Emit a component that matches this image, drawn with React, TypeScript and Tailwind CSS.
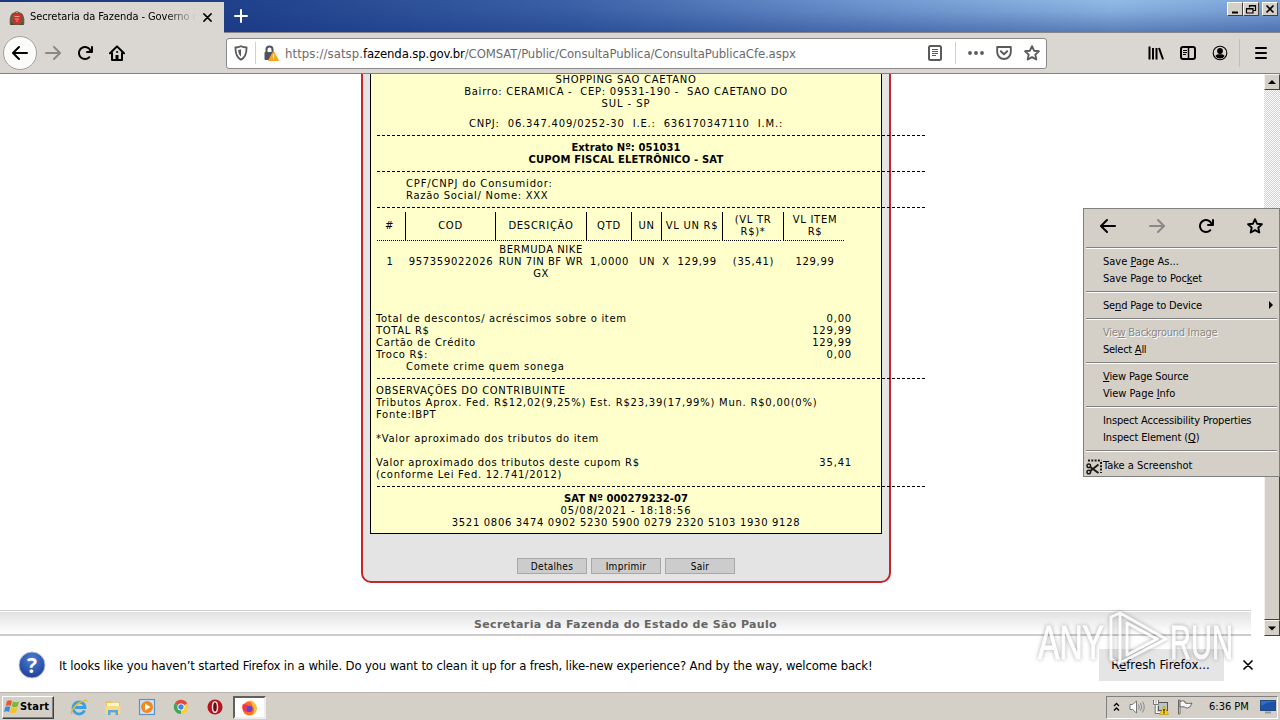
import React from "react";

interface IconProps {
  className?: string;
}

const BackIcon: React.FC<IconProps> = ({ className = "" }) => (
  <svg viewBox="0 0 16 16" fill="currentColor" className={`h-4 w-4 ${className}`}>
    <path d="M15 7H3.414l4.293-4.293a1 1 0 0 0-1.414-1.414l-6 6a1 1 0 0 0 0 1.414l6 6a1 1 0 0 0 1.414-1.414L3.414 9H15a1 1 0 0 0 0-2z" />
  </svg>
);

const ReloadIcon = () => (
  <svg viewBox="0 0 16 16" fill="currentColor" className="h-4 w-4">
    <path d="M15 1a1 1 0 0 0-1 1v2.418A6.995 6.995 0 1 0 8 15a6.954 6.954 0 0 0 4.95-2.05 1 1 0 0 0-1.414-1.414A5.019 5.019 0 1 1 12.549 6H10a1 1 0 0 0 0 2h5a1 1 0 0 0 1-1V2a1 1 0 0 0-1-1z" />
  </svg>
);

const HomeIcon = () => (
  <svg viewBox="0 0 16 16" fill="none" stroke="currentColor" strokeWidth="2" strokeLinecap="round" strokeLinejoin="round" className="h-4 w-4">
    <path d="M1 8.2 8 1.4l7 6.8M3 8v7h10V8" />
    <path d="M8 14v-4" strokeWidth="3" strokeLinecap="butt" />
    <circle cx="8" cy="7" r=".6" strokeWidth="1" />
  </svg>
);

const StarIcon = () => (
  <svg viewBox="0 0 16 16" fill="none" stroke="currentColor" strokeWidth="1.9" strokeLinejoin="round" className="h-4 w-4">
    <path d="M8 1.2l2.05 4.5 4.85.55-3.6 3.35 1 4.9L8 12.05 3.7 14.5l1-4.9L1.1 6.25l4.85-.55z" />
  </svg>
);

const ShieldIcon = () => (
  <svg viewBox="0 0 16 16" className="h-4 w-4">
    <path d="M8 1.2c1.8.8 3.7 1.2 5.6 1.3 0 5.5-.9 9.8-5.6 12.2C3.3 12.3 2.4 8 2.4 2.5 4.3 2.4 6.2 2 8 1.2z" fill="none" stroke="#5a5a5a" strokeWidth="1.8" strokeLinejoin="round" />
    <path d="M8 4.2v7.3C6 10 5.3 7.8 5.2 4.9 6.2 4.8 7.1 4.6 8 4.2z" fill="#5a5a5a" />
  </svg>
);

const LockWarnIcon = () => (
  <svg viewBox="0 0 16 16" className="h-4 w-4">
    <path d="M3.500 8V4.500a3 3 0 0 1 6 0V8" fill="none" stroke="#4d5360" strokeWidth="2" />
    <rect x="1.500" y="7" width="10" height="8" rx="1" fill="#4d5360" />
    <path d="M10.500 6.500l5 9h-10z" fill="#f8a61c" stroke="#f8a61c" strokeWidth="1" strokeLinejoin="round" />
    <path d="M10.500 9v3.500M10.500 13.500v1.200" stroke="#fff" strokeWidth="1.2" />
  </svg>
);

const ReaderIcon = () => (
  <svg viewBox="0 0 16 16" fill="none" stroke="#5a5a5a" className="h-4 w-4">
    <rect x="2" y="1" width="12" height="14" rx="1.5" strokeWidth="2" />
    <path d="M5 4.500h6M5 6.500h6M5 8.500h6M5 10.500h4" strokeWidth="1" />
  </svg>
);

const PocketIcon = () => (
  <svg viewBox="0 0 16 16" fill="none" stroke="currentColor" strokeWidth="1.9" strokeLinecap="round" strokeLinejoin="round" className="h-4 w-4">
    <path d="M1.2 2h13.600v5.200a6.800 6.800 0 0 1-13.600 0z" />
    <path d="M4.800 6.200 8 9.200l3.200-3" />
  </svg>
);

const LibraryIcon = () => (
  <svg viewBox="0 0 16 16" stroke="currentColor" strokeWidth="2" className="h-4 w-4">
    <path d="M1.500 1.500v13M5 3v11.500M8.500 3v11.500M11 3l4 11.300" fill="none" />
  </svg>
);

const SidebarIcon = () => (
  <svg viewBox="0 0 16 16" fill="none" stroke="currentColor" className="h-4 w-4">
    <rect x="1" y="2" width="14" height="12" rx="2" strokeWidth="2" />
    <path d="M8.500 2v12" strokeWidth="1.5" />
    <path d="M3 5.500h4M3 7.500h4M3 9.500h3" strokeWidth="1" />
  </svg>
);

const AccountIcon = () => (
  <svg viewBox="0 0 16 16" className="h-4 w-4">
    <circle cx="8" cy="8" r="6.800" fill="none" stroke="currentColor" strokeWidth="1.1" />
    <circle cx="8" cy="6" r="2.900" fill="currentColor" />
    <path d="M3.300 11c1.300-1.600 2.600-1.800 4.700-1.800s3.400.2 4.700 1.800A5.600 5.600 0 0 1 8 13.600 5.600 5.600 0 0 1 3.300 11z" fill="currentColor" />
  </svg>
);

const CrossIcon: React.FC<IconProps> = ({ className = "" }) => (
  <svg viewBox="0 0 10 10" stroke="currentColor" strokeWidth="1.7" strokeLinecap="round" className={className}>
    <path d="M1 1l8 8M9 1L1 9" />
  </svg>
);

const CrestIcon = () => (
  <svg viewBox="0 0 16 16" className="h-4 w-4">
    <path d="M1 15C0 10 1 4 4 3l4-2 4 2c3 1 4 7 3 12z" fill="#6d5a3e" />
    <path d="M2 12c1 2 3 3 6 3s5-1 6-3v3H2z" fill="#4c4438" />
    <path d="M4 4h8v5c0 3-2 4.500-4 5-2-.5-4-2-4-5z" fill="#d22f2a" />
    <path d="M5.500 6.500h5M6 9h4M7 11h2" stroke="#f3b1a0" strokeWidth=".8" />
    <path d="M8 1l1 2H7z" fill="#b9b4a5" />
  </svg>
);

const WindowButton: React.FC<{ children: React.ReactNode }> = ({ children }) => (
  <div className="h-[14px] w-4 border border-t-white border-l-white border-r-[#404040] border-b-[#404040] bg-[#d4d0c8]">
    <svg viewBox="0 0 14 12" className="h-3 w-[14px]" fill="none" stroke="currentColor">
      {children}
    </svg>
  </div>
);

const TabStrip = () => (
  <div className="h-[33px] shrink-0 border-b border-[#85858a] bg-[linear-gradient(180deg,rgba(24,52,130,0)_0%,rgba(24,52,130,0.1)_35%,rgba(24,52,130,0.45)_100%),linear-gradient(90deg,#1c3a7e_0%,#21428c_20%,#3c62a8_45%,#7097d0_68%,#92bbe6_87%,#7da4d8_100%)] flex">
    <div className="mt-[2px] h-[31px] w-[224px] bg-[#dad6d1] flex items-center pl-[9px] -mb-px">
      <CrestIcon />
      <span className="ml-[5px] w-[166px] overflow-hidden whitespace-nowrap text-[11px] tracking-[-0.07px] text-black [mask-image:linear-gradient(90deg,#000_82%,transparent_100%)]">
        Secretaria da Fazenda - Governo d
      </span>
      <CrossIcon className="ml-[7px] h-[9px] w-[9px]" />
    </div>
    <svg viewBox="0 0 14 14" className="ml-[10px] mt-[9px] h-[14px] w-[14px]" stroke="#fff" strokeWidth="2" strokeLinecap="round">
      <path d="M7 1v12M1 7h12" />
    </svg>
    <div className="ml-auto mr-[2px] mt-[2px] flex text-black">
      <WindowButton>
        <path d="M4 9.500h6" strokeWidth="2" />
      </WindowButton>
      <WindowButton>
        <path d="M5.500 4.500v-2h6v5h-2M5.500 3h6M2.500 5.500h6.500v4.500H2.500zM2.500 6h6.500" strokeWidth="1.2" />
      </WindowButton>
      <div className="w-[3px]" />
      <WindowButton>
        <path d="M3.500 2.500l7 7M10.500 2.500l-7 7" strokeWidth="1.7" />
      </WindowButton>
    </div>
  </div>
);

const NavBar = () => (
  <div className="h-[41px] shrink-0 border-b border-[#808080] bg-[#dad6d1] flex items-center pl-[3px] text-black">
    <div className="h-[34px] w-[34px] rounded-full border border-[#a3a19d] bg-[#fbfbfa] flex items-center justify-center">
      <BackIcon />
    </div>
    <BackIcon className="ml-2 rotate-180 text-[#8b8985]" />
    <div className="ml-4 flex gap-4">
      <ReloadIcon />
      <HomeIcon />
    </div>

    {/* Address bar */}
    <div className="ml-[101px] h-[31px] w-[821px] rounded-[3px] border border-[#8a8a8a] bg-white flex items-center">
      <div className="ml-[6px]">
        <ShieldIcon />
      </div>
      <div className="ml-[6px] h-[22px] w-px bg-[#d0d0d0]" />
      <div className="ml-[7px]">
        <LockWarnIcon />
      </div>
      <div className="ml-[6px] mt-px flex whitespace-nowrap text-[13px] leading-4 text-[#6b6b6b]">
        <span className="tracking-[0.07px]">https://satsp.</span>
        <span className="tracking-[-0.13px] text-black">fazenda.sp.gov.br</span>
        <span className="tracking-[-0.1px]">/COMSAT/Public/ConsultaPublica/ConsultaPublicaCfe.aspx</span>
      </div>
      <div className="ml-auto mr-[6px] flex items-center text-[#5a5a5a]">
        <ReaderIcon />
        <div className="ml-3 h-[22px] w-px bg-[#d0d0d0]" />
        <svg viewBox="0 0 16 16" fill="currentColor" className="ml-3 h-4 w-4">
          <circle cx="2" cy="8" r="1.9" />
          <circle cx="8" cy="8" r="1.9" />
          <circle cx="14" cy="8" r="1.9" />
        </svg>
        <div className="ml-3 flex gap-3">
          <PocketIcon />
          <StarIcon />
        </div>
      </div>
    </div>

    <div className="ml-auto flex items-center pr-[11px]">
      <div className="flex gap-4">
        <LibraryIcon />
        <SidebarIcon />
        <AccountIcon />
      </div>
      <div className="ml-[11px] h-7 w-px bg-[#c3bfba]" />
      <svg viewBox="0 0 16 16" className="ml-[13px] h-4 w-4" stroke="currentColor" strokeWidth="2" strokeLinecap="round">
        <path d="M3 3h10M3 8h10M3 13h10" />
      </svg>
    </div>
  </div>
);

/* Dashed separator, runs past the right edge of the receipt */
const Dashes: React.FC<IconProps> = ({ className = "h-3" }) => (
  <div className={`pl-px pt-[5px] ${className}`}>
    <div className="h-px w-[549px] bg-[repeating-linear-gradient(90deg,#000_0_3px,transparent_3px_5px)]" />
  </div>
);

const columns = [
  { label: "#", width: "w-[30px]", pad: "pr-[2px]" },
  { label: "COD", width: "w-[90px]", pad: "" },
  { label: "DESCRIÇÃO", width: "w-[91px]", pad: "" },
  { label: "QTD", width: "w-[45px]", pad: "" },
  { label: "UN", width: "w-[30px]", pad: "" },
  { label: "VL UN R$", width: "w-[61px]", pad: "" },
  { label: "(VL TR R$)*", width: "w-[61px]", pad: "px-2" },
  { label: "VL ITEM R$", width: "w-[62px]", pad: "px-1" },
];

const totals = [
  ["Total de descontos/ acréscimos sobre o item", "0,00"],
  ["TOTAL R$", "129,99"],
  ["Cartão de Crédito", "129,99"],
  ["Troco R$:", "0,00"],
];

const Receipt = () => (
  <div className="h-[460px] border border-t-0 border-black bg-[#ffffcc] px-[5px] font-['DejaVu_Sans',Verdana,sans-serif] text-[10px] leading-3 tracking-[0.7px] text-black whitespace-pre">
    <div className="text-center">
      <p>SHOPPING SAO CAETANO</p>
      <p className="tracking-[0.73px]">Bairro: CERAMICA -  CEP: 09531-190 -  SAO CAETANO DO</p>
      <p className="tracking-[0.9px]">SUL - SP</p>
      <p className="mt-2 tracking-[0.81px]">CNPJ:  06.347.409/0252-30  I.E.:  636170347110  I.M.:</p>
    </div>
    <Dashes />
    <div className="text-center font-bold">
      <p className="tracking-[0.05px]">Extrato Nº: 051031</p>
      <p className="tracking-[0.15px]">CUPOM FISCAL ELETRÔNICO - SAT</p>
    </div>
    <Dashes />
    <div className="pl-[30px]">
      <p className="tracking-[0.83px]">CPF/CNPJ do Consumidor:</p>
      <p>Razão Social/ Nome: XXX</p>
    </div>
    <Dashes className="h-[10px]" />

    {/* Item table */}
    <div className="flex h-[29px] whitespace-normal">
      {columns.map((c, i) => (
        <div key={c.label} className={`${c.width} flex flex-col ${i < columns.length - 1 ? "border-r border-black" : ""}`}>
          <div className={`flex flex-1 items-center justify-center text-center ${c.pad}`}>{c.label}</div>
          <div className="mx-px h-px bg-[repeating-linear-gradient(90deg,#000_0_1px,transparent_1px_2px)]" />
        </div>
      ))}
    </div>
    <div className="mt-[3px] flex items-center text-center">
      <span className="w-[30px] pr-[2px]">1</span>
      <span className="w-[90px]">957359022026</span>
      <span className="w-[91px] pr-px tracking-[0.55px]">{"BERMUDA NIKE\nRUN 7IN BF WR\nGX"}</span>
      <span className="w-[45px]">1,0000</span>
      <span className="w-[30px]">UN</span>
      <span className="w-[61px] pr-[6px]">X  129,99</span>
      <span className="w-[61px]">(35,41)</span>
      <span className="w-[62px]">129,99</span>
    </div>

    <div className="mt-[33px] w-[476px]">
      {totals.map(([label, value]) => (
        <div key={label} className="flex justify-between">
          <span className="tracking-[0.67px]">{label}</span>
          <span className="tracking-[0.8px]">{value}</span>
        </div>
      ))}
      <p className="pl-[30px]">Comete crime quem sonega</p>
    </div>
    <Dashes />
    <div className="w-[476px]">
      <p className="tracking-[0.68px]">OBSERVAÇÕES DO CONTRIBUINTE</p>
      <p className="tracking-[0.765px]">Tributos Aprox. Fed. R$12,02(9,25%) Est. R$23,39(17,99%) Mun. R$0,00(0%)</p>
      <p>Fonte:IBPT</p>
      <p className="mt-3 tracking-[0.69px]">*Valor aproximado dos tributos do item</p>
      <div className="mt-3 flex justify-between">
        <span className="tracking-[0.65px]">Valor aproximado dos tributos deste cupom R$</span>
        <span className="tracking-[0.8px]">35,41</span>
      </div>
      <p className="tracking-[0.72px]">(conforme Lei Fed. 12.741/2012)</p>
    </div>
    <Dashes />
    <div className="text-center">
      <p className="font-bold tracking-[0.08px]">SAT Nº 000279232-07</p>
      <p className="tracking-[0.87px]">05/08/2021 - 18:18:56</p>
      <p className="tracking-[0.68px]">3521 0806 3474 0902 5230 5900 0279 2320 5103 1930 9128</p>
    </div>
  </div>
);

const ScrollButton: React.FC<{ path: string }> = ({ path }) => (
  <div className="h-4 w-4 shrink-0 border border-t-[#f4f2ee] border-l-[#f4f2ee] border-r-[#404040] border-b-[#404040] bg-[#d4d0c8]">
    <svg viewBox="0 0 14 14" className="h-[14px] w-[14px]">
      <path d={path} fill="#000" />
    </svg>
  </div>
);

const Page = () => (
  <div className="flex h-[562px] shrink-0 bg-white">
    <div className="w-[1252px] flex flex-col">
      <div className="mx-auto h-[509px] w-[530px] rounded-b-[10px] border-2 border-t-0 border-[#c1272d] bg-[#e4e4e4] px-[7px]">
        <Receipt />
        <div className="mt-6 flex justify-center gap-1 text-[10px] tracking-[0.3px]">
          {["Detalhes", "Imprimir", "Sair"].map((b) => (
            <button key={b} className="h-4 w-[70px] border border-[#a8a8a8] bg-[#cccccc] leading-4 text-black">
              {b}
            </button>
          ))}
        </div>
      </div>
      <div className="mr-px mt-auto h-[26px] border-t border-b-2 border-[#cccccc] pt-px">
        <div className="h-[22px] bg-[linear-gradient(180deg,#e2e2e2,#ffffff)] text-center font-['DejaVu_Sans',Verdana,sans-serif] text-[11px] font-bold leading-[26px] tracking-[0.35px] text-[#666666]">
          Secretaria da Fazenda do Estado de São Paulo
        </div>
      </div>
    </div>
    <div className="ml-auto flex w-4 flex-col bg-[repeating-conic-gradient(#d4d0c8_0_25%,#ffffff_0_50%)] bg-[length:2px_2px]">
      <ScrollButton path="M7 5l4 4H3z" />
      <div className="mt-auto h-[240px] border border-t-white border-l-[#f4f2ee] border-r-[#404040] border-b-[#404040] bg-[#d4d0c8]" />
      <ScrollButton path="M7 9.500l4-4H3z" />
    </div>
  </div>
);

const MenuSeparator = () => (
  <div className="h-[10px] px-px pt-1">
    <div className="h-[2px] border-t border-[#808080] bg-white" />
  </div>
);

const MenuItem: React.FC<{ children: React.ReactNode; className?: string }> = ({ children, className = "" }) => (
  <div className={`relative h-[17px] pl-[18px] leading-[17px] ${className}`}>{children}</div>
);

const ContextMenu = () => (
  <div className="absolute left-[1083px] top-[208px] h-[269px] w-[197px] border border-[#808080] bg-[#d4d0c8] p-px text-[11px] whitespace-nowrap text-black">
    <div className="flex h-[33px] items-center justify-between px-[15px] pb-px">
      <BackIcon />
      <BackIcon className="rotate-180 text-[#8b8985]" />
      <ReloadIcon />
      <StarIcon />
    </div>
    <MenuSeparator />
    <MenuItem>Save <u>P</u>age As...</MenuItem>
    <MenuItem className="tracking-[-0.05px]">Save Page to Poc<u>k</u>et</MenuItem>
    <MenuSeparator />
    <MenuItem className="tracking-[-0.17px]">
      Se<u>n</u>d Page to Device
      <svg viewBox="0 0 4 8" className="absolute right-[5px] top-[4px] h-2 w-1">
        <path d="M0 0l4 4-4 4z" />
      </svg>
    </MenuItem>
    <MenuSeparator />
    <MenuItem className="tracking-[-0.26px] text-[#8a8884] [text-shadow:1px_1px_0_#fff]">Vie<u>w</u> Background Image</MenuItem>
    <MenuItem className="tracking-[-0.26px]">Select <u>A</u>ll</MenuItem>
    <MenuSeparator />
    <MenuItem className="tracking-[-0.14px]"><u>V</u>iew Page Source</MenuItem>
    <MenuItem>View Page <u>I</u>nfo</MenuItem>
    <MenuSeparator />
    <MenuItem className="tracking-[-0.15px]">Inspect Accessibility Properties</MenuItem>
    <MenuItem className="tracking-[-0.13px]">Inspect Element (<u>Q</u>)</MenuItem>
    <MenuSeparator />
    <div className="flex h-5 items-center pl-px pt-px">
      <svg viewBox="0 0 16 16" className="h-4 w-4" fill="none" stroke="#1a1a1a">
        <path d="M2 1.500h13.500M15 3v11" strokeWidth="2" strokeDasharray="2 1.3" />
        <circle cx="2.800" cy="6.800" r="1.800" strokeWidth="1.5" />
        <circle cx="2.800" cy="13" r="1.800" strokeWidth="1.5" />
        <path d="M4.200 8l8.300 6M4.200 12l8.300-6.500" strokeWidth="2" />
      </svg>
      <span className="ml-px">Take a Screenshot</span>
    </div>
  </div>
);

const NotificationBar = () => (
  <div className="flex h-[56px] shrink-0 items-center bg-white text-[13px] whitespace-nowrap text-black">
    <svg viewBox="0 0 28 28" className="ml-[18px] mt-[2px] h-7 w-7">
      <defs>
        <radialGradient id="help" cx=".5" cy=".3" r=".75">
          <stop offset="0" stopColor="#4f7fd6" />
          <stop offset="1" stopColor="#173a92" />
        </radialGradient>
      </defs>
      <circle cx="14" cy="14" r="13" fill="url(#help)" stroke="#b4c0d8" strokeWidth="1" />
      <text x="14" y="21.5" textAnchor="middle" fill="#fff" fontSize="21" fontWeight="bold" fontFamily="Open Sans, sans-serif">?</text>
    </svg>
    <span className="ml-[13px] mt-[3px] tracking-[-0.14px]">
      It looks like you haven’t started Firefox in a while. Do you want to clean it up for a fresh, like-new experience? And by the way, welcome back!
    </span>
    <button className="ml-auto mt-[2px] h-8 w-[125px] bg-[#e5e5e5] pr-[2px] tracking-[0.05px]">
      R<u>e</u>fresh Firefox...
    </button>
    <CrossIcon className="ml-[19px] mr-[27px] mt-[2px] h-[10px] w-[10px]" />
  </div>
);

const Watermark = () => (
  <svg viewBox="0 0 200 60" className="pointer-events-none absolute left-[1036px] top-[608px] h-[60px] w-[200px] opacity-75 drop-shadow-[0_0_2px_rgba(0,0,0,0.45)]">
    <g fill="#ffffff" stroke="#ffffff" strokeWidth="1" fontFamily="Liberation Sans, sans-serif" fontSize="49">
      <text x="2" y="51" textLength="66" lengthAdjust="spacingAndGlyphs">ANY</text>
      <text x="134" y="51" textLength="63" lengthAdjust="spacingAndGlyphs">RUN</text>
    </g>
    <path d="M84 5l-9 4v42l9 5M84 5v50l46-24zM91 15l30 16-30 16z" fill="none" stroke="#fff" strokeWidth="3" strokeLinejoin="round" />
  </svg>
);

const WindowsFlag = () => (
  <svg viewBox="0 0 16 16" className="h-4 w-4">
    <path d="M3 2c2-1 3.500-1 5 0L6.700 7c-1.700-1-3-1-5 0z" fill="#e8582a" />
    <path d="M9 2.500c2 1 3.500 1 6 0L13.600 7.500c-2 1-4 1-6 0z" fill="#7ab93c" />
    <path d="M1.300 8c2-1 3.500-1 5 0L5 13c-1.700-1-3-1-5 0z" fill="#3f8ad8" />
    <path d="M7.300 8.500c2 1 3.500 1 6 0L12 13.500c-2 1-4 1-6 0z" fill="#f6c224" />
  </svg>
);

const IeIcon = () => (
  <svg viewBox="0 0 18 18" className="h-[18px] w-[18px]" fill="none">
    <path d="M14.500 12.500a6 6 0 1 1 .5-3H5" stroke="#3aa0e0" strokeWidth="2.8" />
    <path d="M2 16c-2-2 2-8 7-11s8-3.500 8-1.500" stroke="#e9b932" strokeWidth="1.5" />
  </svg>
);

const ExplorerIcon = () => (
  <svg viewBox="0 0 18 18" className="h-[18px] w-[18px]">
    <path d="M2 3h5l1 1.500h8V15H2z" fill="#e6c65c" />
    <path d="M3 5h12v5H3z" fill="#fbf3c4" />
    <path d="M1.500 8h15v8h-15z" fill="#f5dc84" />
    <path d="M4 17v-5h10v5h-2.500v-2.500h-5V17z" fill="#58a8dc" />
  </svg>
);

const MediaIcon = () => (
  <svg viewBox="0 0 18 18" className="h-[18px] w-[18px]">
    <rect x="1.5" y="1.5" width="15" height="15" fill="#cfe2f5" stroke="#5f93c8" strokeWidth="1.2" />
    <circle cx="9" cy="9" r="6" fill="#f08a1c" />
    <path d="M7 5.500l5.500 3.500L7 12.500z" fill="#fff" />
  </svg>
);

const ChromeIcon = () => (
  <svg viewBox="0 0 18 18" className="h-4 w-4">
    <path d="M9 9L2 5a8 8 0 0 1 14 0z" fill="#e04a3a" />
    <path d="M9 9l7-4a8 8 0 0 1-7 12z" fill="#f8cf3a" />
    <path d="M9 9v8A8 8 0 0 1 2 5z" fill="#3fa654" />
    <circle cx="9" cy="9" r="4" fill="#fff" />
    <circle cx="9" cy="9" r="3" fill="#4484ee" />
  </svg>
);

const OperaIcon = () => (
  <svg viewBox="0 0 18 18" className="h-4 w-4">
    <circle cx="9" cy="9" r="8.5" fill="#b81420" />
    <ellipse cx="9" cy="9" rx="2.8" ry="6" fill="#6d0710" stroke="#f2e2e2" strokeWidth="1.6" />
  </svg>
);

const FirefoxIcon = () => (
  <svg viewBox="0 0 18 18" className="h-[17px] w-[17px]">
    <circle cx="9" cy="10" r="7.5" fill="#ff6a2a" />
    <path d="M10 1c4 2 7 5 6.500 10-.3 3-3 6-7 6.500 4-2 5-5 4-8S9.500 4 10 1z" fill="#ffbd2e" />
    <path d="M2 5c1 1 2 1 3.500.8C7 5.500 8 7 7 8c-2 1-2 4 1 5.500-4 1-7-2-6.500-6z" fill="#f2324e" />
    <circle cx="9" cy="10.5" r="3.3" fill="#6a42c8" />
  </svg>
);

const Taskbar = () => (
  <div className="flex h-7 shrink-0 items-center border-t border-[#b9b5ae] bg-[#d4d0c8] px-[2px] text-[11px] text-black">
    <button className="mt-px flex h-[23px] w-[52px] items-center border border-t-white border-l-white border-r-[#404040] border-b-[#404040] pl-px shadow-[inset_-1px_-1px_0_#808080]">
      <WindowsFlag />
      <span className="font-bold tracking-[0.2px]">Start</span>
    </button>
    <div className="ml-4 mt-px flex items-center">
      <IeIcon />
      <div className="ml-4"><ExplorerIcon /></div>
      <div className="ml-4"><MediaIcon /></div>
      <div className="ml-[17px]"><ChromeIcon /></div>
      <div className="ml-[18px]"><OperaIcon /></div>
    </div>
    <div className="ml-[10px] mt-px flex h-[23px] w-[33px] items-center justify-center border-2 border-t-[#606060] border-l-[#606060] border-r-[#eeeeee] border-b-[#eeeeee] bg-white">
      <FirefoxIcon />
    </div>

    {/* Tray */}
    <div className="ml-auto mt-px flex h-[23px] w-[172px] items-center border border-t-[#808080] border-l-[#808080] border-r-white border-b-white pl-[6px]">
      <svg viewBox="0 0 7 10" className="h-[10px] w-[7px]" fill="none" stroke="#000" strokeWidth="1.3">
        <path d="M1 4l2.500-2.500L6 4M1 8.500L3.500 6 6 8.500" />
      </svg>
      <svg viewBox="0 0 16 16" className="ml-[9px] h-4 w-4" fill="none" stroke="#777" strokeWidth="1">
        <path d="M1 5.500h2.500l4-3.500v12l-4-3.500H1z" fill="#fff" />
        <path d="M9.500 5.500q1.500 2.500 0 5M11.500 4q2.500 4 0 8M13.500 2.500q3.500 5.500 0 11" stroke="#8a8a8a" />
      </svg>
      <svg viewBox="0 0 16 16" className="ml-2 h-4 w-4">
        <rect x="5.5" y="3.5" width="9" height="8" fill="#b8c4cc" stroke="#555" />
        <path d="M1 1.500v4h4v-4M3 5.500V14h6" fill="none" stroke="#f8f8f8" strokeWidth="2" />
        <path d="M.5 1v4.500h5V1M2.200 6v8.500H8" fill="none" stroke="#555" strokeWidth=".8" />
        <path d="M11 7l4.500 8.500h-9z" fill="#fcd01c" stroke="#b8920c" strokeWidth=".6" />
        <path d="M11 10v2.500M11 13.200v1.200" stroke="#000" strokeWidth="1.2" />
      </svg>
      <svg viewBox="0 0 16 16" className="ml-2 h-4 w-4" stroke="#666" strokeWidth="1">
        <path d="M1.500 1h1.500v14H1.500z" fill="#fff" />
        <path d="M3 2.500q3-1.500 5 0v1.500q3.500 1 7 0-1.500 5-4.500 5-2 0-3-1-2.500-.5-4.500 0z" fill="#f6f6f4" />
      </svg>
      <span className="ml-4 mt-px whitespace-nowrap">6:36 PM</span>
      <svg viewBox="0 0 16 14" className="ml-auto mr-px h-[14px] w-4">
        <rect x=".5" y=".5" width="15" height="10" fill="#2f6fc8" stroke="#274a7c" />
        <path d="M1 6q7-5 14-4v8H1z" fill="#1c52a8" />
        <path d="M5 12.500h6" stroke="#8f98a4" strokeWidth="2" />
      </svg>
    </div>
  </div>
);

export default function App() {
  return (
    <div className="relative flex h-[720px] w-[1280px] flex-col overflow-hidden bg-white font-['DejaVu_Sans_Condensed',Tahoma,sans-serif]">
      <TabStrip />
      <NavBar />
      <Page />
      <NotificationBar />
      <Taskbar />
      <ContextMenu />
      <Watermark />
    </div>
  );
}
